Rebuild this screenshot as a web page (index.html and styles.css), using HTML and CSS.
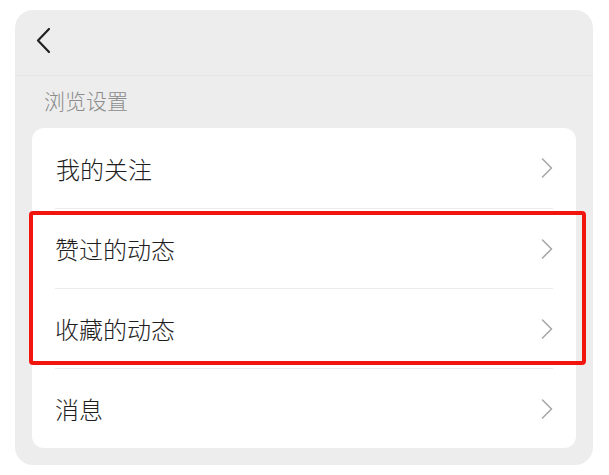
FILE: index.html
```html
<!DOCTYPE html>
<html lang="zh">
<head>
<meta charset="utf-8">
<link rel="stylesheet" href="styles.css">
</head>
<body>
<div class="panel">
  <div class="header">
    <svg class="back" width="16" height="28" viewBox="0 0 16 28"><polyline points="13,2 2,13.5 13,25" fill="none" stroke="#222" stroke-width="2.2" stroke-linecap="round" stroke-linejoin="round"/></svg>
  </div>
  <div class="section-label">浏览设置</div>
  <div class="card">
    <div class="row"><div class="row-inner"><span class="label">我的关注</span><svg class="chev" width="12" height="20" viewBox="0 0 12 20"><polyline points="1.5,1 10.5,10 1.5,19" fill="none" stroke="#a8a8a8" stroke-width="1.6" stroke-linecap="round" stroke-linejoin="round"/></svg></div></div>
    <div class="row"><div class="row-inner"><span class="label">赞过的动态</span><svg class="chev" width="12" height="20" viewBox="0 0 12 20"><polyline points="1.5,1 10.5,10 1.5,19" fill="none" stroke="#a8a8a8" stroke-width="1.6" stroke-linecap="round" stroke-linejoin="round"/></svg></div></div>
    <div class="row"><div class="row-inner"><span class="label">收藏的动态</span><svg class="chev" width="12" height="20" viewBox="0 0 12 20"><polyline points="1.5,1 10.5,10 1.5,19" fill="none" stroke="#a8a8a8" stroke-width="1.6" stroke-linecap="round" stroke-linejoin="round"/></svg></div></div>
    <div class="row"><div class="row-inner"><span class="label">消息</span><svg class="chev" width="12" height="20" viewBox="0 0 12 20"><polyline points="1.5,1 10.5,10 1.5,19" fill="none" stroke="#a8a8a8" stroke-width="1.6" stroke-linecap="round" stroke-linejoin="round"/></svg></div></div>
  </div>
</div>
<div class="highlight"></div>
</body>
</html>
```
FILE: styles.css
```css
html, body {
  margin: 0;
  padding: 0;
  background: #ffffff;
}
body {
  position: relative;
  width: 609px;
  height: 475px;
  font-family: "Noto Sans CJK SC", "Noto Sans", sans-serif;
}
.panel {
  margin: 10px 0 0 15px;
  width: 578px;
  height: 455px;
  background: #ededed;
  border-radius: 18px;
  box-sizing: border-box;
  display: flex;
  flex-direction: column;
  overflow: hidden;
}
.header {
  height: 66px;
  flex: none;
  border-bottom: 1px solid #e4e4e4;
  display: flex;
  align-items: flex-start;
  padding: 17px 0 0 21px;
  box-sizing: border-box;
}
.back {
  display: block;
}
.section-label {
  height: 52px;
  flex: none;
  padding-left: 29px;
  padding-bottom: 3px;
  display: flex;
  align-items: center;
  font-size: 21px;
  font-weight: 300;
  color: #8c8c8c;
  line-height: 1;
  box-sizing: border-box;
}
.card {
  margin: 0 17px;
  background: #ffffff;
  border-radius: 12px;
  display: flex;
  flex-direction: column;
}
.row {
  height: 80px;
  padding: 0 23px 0 24px;
}
.row-inner {
  height: 100%;
  display: flex;
  align-items: center;
  justify-content: space-between;
  box-sizing: border-box;
}
.row + .row .row-inner {
  border-top: 1px solid #ececec;
  margin-left: -1px;
}
.label {
  font-size: 24px;
  font-weight: 300;
  color: #1e1e1e;
  line-height: 1;
  padding-top: 1px;
}
.chev {
  display: block;
}
.highlight {
  position: absolute;
  left: 29px;
  top: 211px;
  width: 557px;
  height: 154px;
  box-sizing: border-box;
  border: 4px solid #f2150d;
  border-radius: 4px;
}
```
